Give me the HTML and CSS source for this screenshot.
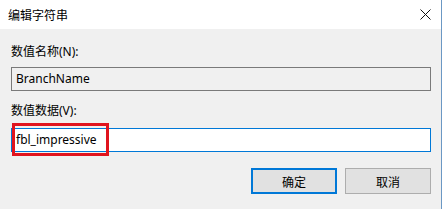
FILE: index.html
```html
<!DOCTYPE html>
<html lang="zh-CN">

<head>
	<meta charset="UTF-8">
	<meta name="viewport"
				content="width=device-width, initial-scale=1.0">
	<title>编辑字符串</title>
	<link rel="stylesheet" href="styles.css">
</head>

<body>
	<div class="dialog">
		<div class="titlebar">
			<span class="title">编辑字符串</span>
			<svg class="close" width="11" height="11" viewBox="0 0 11 11">
				<path d="M0.5 0.5 L10.5 10.5 M10.5 0.5 L0.5 10.5" stroke="#111" stroke-width="1" fill="none" />
			</svg>
		</div>
		<div class="content">
			<label class="label name-label">数值名称(N):</label>
			<div class="field field-readonly">BranchName</div>
			<label class="label data-label">数值数据(V):</label>
			<div class="field-wrap">
				<div class="field field-active">fbl_impressive</div>
				<div class="highlight"></div>
			</div>
			<div class="buttons">
				<button class="btn btn-default">确定</button>
				<button class="btn">取消</button>
			</div>
		</div>
	</div>
</body>

</html>
```

FILE: styles.css
```css
* {
	box-sizing: border-box;
}

body {
	margin: 0;
	font-family: "Noto Sans", "Noto Sans CJK SC", sans-serif;
	font-size: 12px;
	color: #000;
}

.dialog {
	width: 442px;
	height: 209px;
	background-color: #f0f0f0;
	border-right: 1px solid #6b98c4;
}

.titlebar {
	height: 29px;
	background-color: #fff;
	display: flex;
	align-items: center;
	justify-content: space-between;
	padding: 0 10px 0 8px;
}

.title {
	font-family: "Noto Sans CJK SC", sans-serif;
	font-size: 12px;
	line-height: 16px;
}

.close {
	display: block;
}

.content {
	padding: 15px 10px 0 11px;
}

.label {
	display: block;
	line-height: 16px;
	height: 16px;
}

.name-label {
	margin-bottom: 7px;
}

.data-label {
	margin-top: 12px;
	margin-bottom: 9px;
}

.field {
	height: 24px;
	line-height: 22px;
	padding-left: 4px;
	border: 1px solid #7a7a7a;
}

.field-readonly {
	background-color: #f0f0f0;
}

.field-active {
	background-color: #fff;
	border-color: #0078d7;
}

.field-wrap {
	position: relative;
}

.highlight {
	position: absolute;
	left: 1px;
	top: -5px;
	width: 97px;
	height: 33px;
	border: 3px solid #e0141e;
}

.buttons {
	display: flex;
	justify-content: flex-end;
	gap: 8px;
	margin-top: 16px;
}

.btn {
	width: 86px;
	height: 26px;
	background-color: #e1e1e1;
	border: 1px solid #adadad;
	font-family: "Noto Sans CJK SC", sans-serif;
	font-size: 12px;
	padding: 0;
	color: #000;
}

.btn-default {
	border: 2px solid #0078d7;
}
```
